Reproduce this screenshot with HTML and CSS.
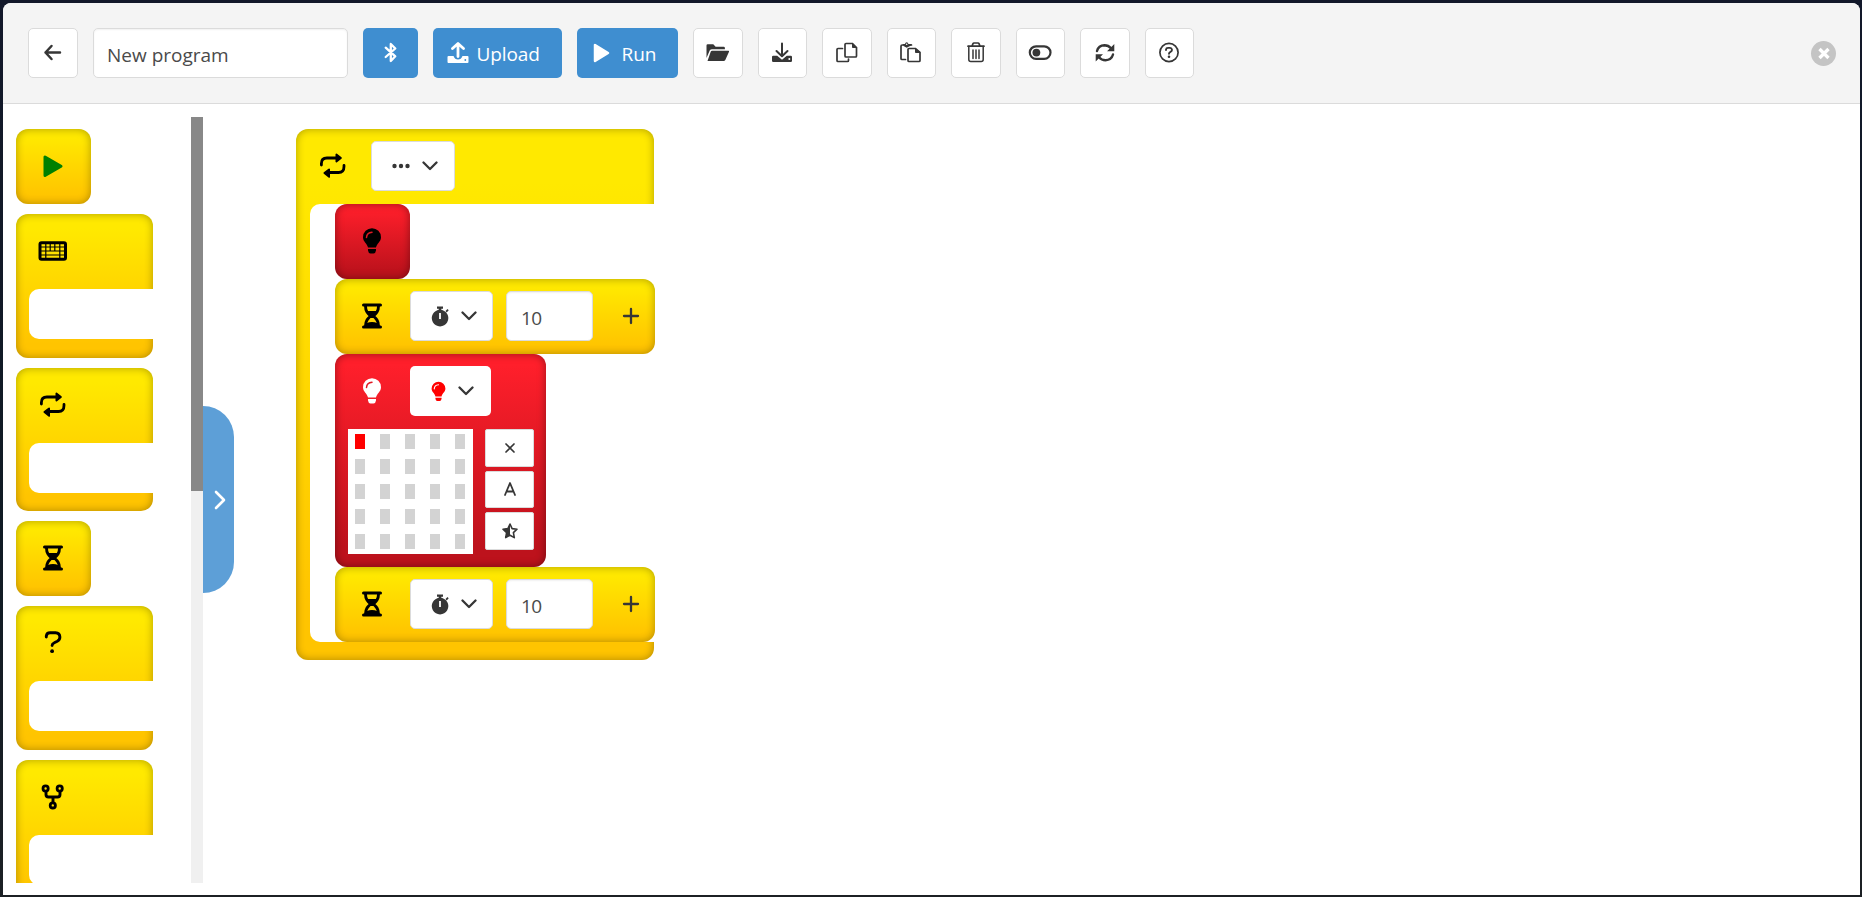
FILE: index.html
```
<!DOCTYPE html>
<html lang="en">
<head>
<meta charset="utf-8">
<title>Program editor</title>
<link rel="stylesheet" href="styles.css">
</head>
<body>
<svg class="defs" aria-hidden="true">
  <symbol id="repeat" viewBox="0 0 30 30"><path d="M3.400 14v-1.500q0-5.500 5.500-5.500H19M26 14.500v1q0 6-5.500 6H10" fill="none" stroke="currentColor" stroke-width="2.800" stroke-linecap="round"/><path d="M17.500 3.200q.5-1 1.500-.4l4.500 3.400q.8.800 0 1.600L19 11.200q-1 .6-1.500-.4zM12 18.200q-.4-1-1.500-.4L5.800 21.200q-.8.700 0 1.500l4.700 3.900q1 .6 1.500-.4z" fill="currentColor"/></symbol>
  <symbol id="hourglass" viewBox="0 0 30 30"><path d="M6.500 4h17M6.500 26h17" stroke="currentColor" stroke-width="3" stroke-linecap="round"/><path d="M8.500 5c0 5 2 7 5 10-3 3-5 5-5 10M21.500 5c0 5-2 7-5 10 3 3 5 5 5 10" fill="none" stroke="currentColor" stroke-width="2.900"/><path d="M9.500 10h11L15 16zM8.500 25l1.500-3q2-1 5-1t5 1l1.500 3v1.500h-13zM12.500 14h5v3h-5z" fill="currentColor"/></symbol>
  <symbol id="bulb" viewBox="0 0 30 30"><path d="M15 2.200a9 9 0 0 0-9 9c0 4.500 4 6 5 10.300h8c1-4.300 5-5.800 5-10.300a9 9 0 0 0-9-9zM11 23h8v1.500q-.4 2.900-2.500 2.900h-3q-2.100 0-2.500-2.900z" fill="currentColor"/><path class="glint" d="M9.500 11.500q.3-5 5.500-5.300" fill="none" stroke-width="1.500" stroke-linecap="round"/></symbol>
  <symbol id="stopwatch" viewBox="0 0 20 22"><path d="M7 1.500h6v2.300H7zM8.700 3h2.600v3H8.700zM15.500 6l2-2 1.200 1.200-2 2.200z" fill="currentColor"/><path fill-rule="evenodd" d="M10 4.800a8.300 8.300 0 1 0 .1 0zM9.100 8h1.800v6H9.100z" fill="currentColor"/></symbol>
  <symbol id="chevron" viewBox="0 0 16 10"><path d="M1.500 1.500 8 8l6.500-6.500" fill="none" stroke="currentColor" stroke-width="2.300" stroke-linecap="round" stroke-linejoin="round"/></symbol>
  <symbol id="plus" viewBox="0 0 18 18"><path d="M9 2v14M2 9h14" stroke="currentColor" stroke-width="2.300" stroke-linecap="round"/></symbol>
</svg>

<main class="modal">
  <header class="toolbar">
    <button class="btn btn-back"><svg class="ico" viewBox="0 0 30 30"><path d="M22 14.500H7.500M13.500 8 7.500 14.500 13.500 21" fill="none" stroke="currentColor" stroke-width="2.500" stroke-linecap="round" stroke-linejoin="round"/></svg></button>
    <input class="field name" value="New program" aria-label="Program name">
    <button class="btn primary bluetooth"><svg class="ico" viewBox="0 0 30 30"><path d="M9.700 9.700 19.300 18.300 14.800 23V6l4.500 4.500-9.600 8.500" fill="none" stroke="currentColor" stroke-width="2.300" stroke-linecap="round" stroke-linejoin="round"/></svg></button>
    <button class="btn primary upload"><svg width="22" height="22" viewBox="0 0 22 22"><path d="M.5 15q0-1 1-1h5q1.300 3.500 4.500 3.500t4.500-3.500h5q1 0 1 1v5q0 1-1 1h-19q-1 0-1-1z" fill="currentColor"/><path d="M11 14.500V3M5.500 6.500 11 1.500l5.500 5" fill="none" stroke="currentColor" stroke-width="2.800" stroke-linejoin="round" stroke-linecap="round"/><circle cx="18.300" cy="18" r=".9" fill="#3f8ed0"/></svg><span>Upload</span></button>
    <button class="btn primary run"><svg width="17" height="20" viewBox="0 0 17 20"><path d="M2 2v16L15 10z" fill="currentColor" stroke="currentColor" stroke-width="2.500" stroke-linejoin="round"/></svg><span>Run</span></button>
    <button class="btn"><svg class="ico" viewBox="0 0 30 30"><path d="M3.500 20V7.500Q3.500 6.300 4.700 6.300h5.600l2.300 2.400h8q1.300 0 1.300 1.300v1.200H9q-1.500 0-2.300 1.400z" fill="currentColor"/><path d="M9.200 12.700h16.100q1.200 0 .7 1l-3.700 8.300q-.5 1-1.700 1H4.500l3.200-9.300q.4-1 1.500-1z" fill="currentColor"/></svg></button>
    <button class="btn"><svg class="ico" viewBox="0 0 30 30"><path d="M5 19q0-1.200 1.200-1.200h4l4.800 4 4.800-4h4Q25 17.800 25 19v3.800q0 1.200-1.200 1.200H6.200Q5 24 5 22.800z" fill="currentColor"/><path d="M15 5.500v12M9.500 13l5.500 5.300 5.500-5.300" fill="none" stroke="currentColor" stroke-width="2" stroke-linecap="round" stroke-linejoin="round"/><circle cx="22.300" cy="21" r="1" fill="#fff"/></svg></button>
    <button class="btn"><svg class="ico" viewBox="0 0 30 30"><path d="M10.500 10.500H6q-1 0-1 1v11q0 1 1 1h9.500q1 0 1-1V21M14 5.500h6.500l4 4V18q0 1-1 1H14q-1 0-1-1V6.500q0-1 1-1z" fill="none" stroke="currentColor" stroke-width="1.700" stroke-linecap="round"/><path d="M20.500 5.500v4h4z" fill="currentColor" stroke="currentColor"/></svg></button>
    <button class="btn"><svg class="ico" viewBox="0 0 30 30"><path d="M8 7H6.200Q5 7 5 8.200V20.500q0 1 1 1h3.500M14 7h1.500M13 10.500h6.500l4.500 4V22.500q0 1-1 1H13q-1 0-1-1v-11q0-1 1-1z" fill="none" stroke="currentColor" stroke-width="1.700" stroke-linecap="round"/><path d="M19.500 10.500v4H24z" fill="currentColor" stroke="currentColor"/><path d="M7 6h2q.3-1.800 1.700-1.800T12.400 6H16l-1.500 1.700-3.800 2L7.500 8z" fill="currentColor"/><circle cx="10.700" cy="6.300" r=".8" fill="#fff"/></svg></button>
    <button class="btn"><svg class="ico" viewBox="0 0 30 30"><path d="M7.800 8.500v13q0 2 2 2h10.400q2 0 2-2v-13M12 12v8.500M15 12v8.500M18 12v8.500" fill="none" stroke="currentColor" stroke-width="1.500" stroke-linecap="round"/><path d="M7 8.200h16M11 8l1-2.300q.3-.7 1-.7h4q.7 0 1 .7L19 8" fill="none" stroke="currentColor" stroke-width="1.700" stroke-linecap="round"/></svg></button>
    <button class="btn"><svg class="ico" viewBox="0 0 30 30"><rect x="4.800" y="8.300" width="20.700" height="12.600" rx="6.300" fill="none" stroke="currentColor" stroke-width="2.200"/><circle cx="11.400" cy="14.600" r="3.900" fill="currentColor"/></svg></button>
    <button class="btn"><svg class="ico" viewBox="0 0 30 30"><path d="M7 13Q8.500 7.500 14.500 7.300q4 0 6.500 3M23 16.500Q21.500 22 15.500 22.200q-4 0-6.500-3" fill="none" stroke="currentColor" stroke-width="2.400" stroke-linecap="round"/><path d="M24.300 6v7.200H17zM5.700 23.500v-7.200H13z" fill="currentColor"/></svg></button>
    <button class="btn"><svg class="ico" viewBox="0 0 30 30"><circle cx="15" cy="14.500" r="9.100" fill="none" stroke="currentColor" stroke-width="1.700"/><path d="M12 12v-.5q.2-1.600 2-1.600h2q1.800.1 2 1.900 0 1.300-1.500 2-1.500.7-1.500 2" fill="none" stroke="currentColor" stroke-width="1.900" stroke-linecap="round"/><circle cx="15" cy="18.700" r="1.300" fill="currentColor"/></svg></button>
    <button class="close" aria-label="Close"><svg width="25" height="25" viewBox="0 0 25 25"><path d="m8.500 8 9 9m0-9-9 9" stroke="#fff" stroke-width="3.300"/></svg></button>
  </header>

  <div class="workspace">
    <aside class="palette">
      <div class="palette-list">
        <div class="block small"><div class="glyph go"><svg class="ico" viewBox="0 0 30 30"><path d="M7 6v18.500L23 15.200z" fill="currentColor" stroke="currentColor" stroke-width="3" stroke-linejoin="round"/></svg></div></div>
        <div class="block container"><div class="glyph"><svg class="ico" viewBox="0 0 30 30"><rect x="2" y="6.800" width="25.500" height="16.500" rx="1.500" fill="none" stroke="currentColor" stroke-width="3"/><path d="M3 11h24M3 15h24M3 19h24M7.800 8v14M12.200 8v7M16.800 8v7M21.800 8v14" stroke="currentColor" stroke-width="1.200"/></svg></div><div class="slot"></div></div>
        <div class="block container"><div class="glyph"><svg class="ico"><use href="#repeat"/></svg></div><div class="slot"></div></div>
        <div class="block small"><div class="glyph"><svg class="ico"><use href="#hourglass"/></svg></div></div>
        <div class="block container"><div class="glyph"><svg class="ico" viewBox="0 0 30 30"><path d="M8.300 9V8q.5-3.200 3.700-3.200h5.500q4.200.3 4.400 4.200 0 2.900-2.600 4.300l-3 1.500q-2.200 1-2.200 2.700" fill="none" stroke="currentColor" stroke-width="2.900" stroke-linecap="round"/><circle cx="14.100" cy="23.200" r="1.900" fill="currentColor"/></svg></div><div class="slot"></div></div>
        <div class="block container"><div class="glyph"><svg class="ico" viewBox="0 0 30 30"><path d="M8 9v3.500q0 2.500 2.500 2.500h9q2.500 0 2.500-2.500V9M15 15v5" fill="none" stroke="currentColor" stroke-width="2.900"/><g fill="none" stroke="currentColor" stroke-width="2.800"><circle cx="7.600" cy="6.500" r="2.600"/><circle cx="21.700" cy="6.500" r="2.600"/><circle cx="14.800" cy="23.400" r="2.600"/></g></svg></div><div class="slot"></div></div>
      </div>
      <div class="scrollbar"><div class="thumb"></div></div>
    </aside>
    <button class="drawer" aria-label="More"><svg width="12" height="20" viewBox="0 0 12 20"><path d="m2 2 8 8-8 8" fill="none" stroke="currentColor" stroke-width="2.600" stroke-linecap="round" stroke-linejoin="round"/></svg></button>

    <section class="canvas">
      <div class="block loop">
        <div class="row">
          <div class="glyph"><svg class="ico"><use href="#repeat"/></svg></div>
          <button class="select forever"><svg width="18" height="6" viewBox="0 0 18 6"><g fill="currentColor"><circle cx="2.500" cy="3" r="2.200"/><circle cx="9" cy="3" r="2.200"/><circle cx="15.500" cy="3" r="2.200"/></g></svg><svg class="chev"><use href="#chevron"/></svg></button>
        </div>
        <div class="body">
          <div class="block red small"><div class="glyph"><svg class="ico"><use href="#bulb"/></svg></div></div>
          <div class="block wait row">
            <div class="glyph"><svg class="ico"><use href="#hourglass"/></svg></div>
            <button class="select timer"><svg width="20" height="22"><use href="#stopwatch"/></svg><svg class="chev"><use href="#chevron"/></svg></button>
            <input class="field num" value="10" aria-label="Seconds">
            <svg class="plus"><use href="#plus"/></svg>
          </div>
          <div class="block red display">
            <div class="row">
              <div class="glyph light"><svg class="ico"><use href="#bulb"/></svg></div>
              <button class="select color"><svg class="redbulb"><use href="#bulb"/></svg><svg class="chev"><use href="#chevron"/></svg></button>
            </div>
            <div class="panel">
              <div class="matrix">
                <i class="on"></i><i></i><i></i><i></i><i></i>
                <i></i><i></i><i></i><i></i><i></i>
                <i></i><i></i><i></i><i></i><i></i>
                <i></i><i></i><i></i><i></i><i></i>
                <i></i><i></i><i></i><i></i><i></i>
              </div>
              <div class="tools">
                <button class="tool"><svg width="12" height="12" viewBox="0 0 12 12"><path d="m2 2 8 8m0-8-8 8" stroke="currentColor" stroke-width="1.700" stroke-linecap="round"/></svg></button>
                <button class="tool"><svg width="14" height="16" viewBox="0 0 14 16"><path d="M2 14 7 2l5 12M3.500 10.500h7" fill="none" stroke="currentColor" stroke-width="1.800" stroke-linecap="round" stroke-linejoin="round"/></svg></button>
                <button class="tool"><svg width="18" height="18" viewBox="0 0 18 18"><path d="m9 2 2.100 4.600 4.900.6-3.600 3.400.9 5L9 13.200l-4.300 2.400.9-5L2 7.200l4.900-.6z" fill="none" stroke="currentColor" stroke-width="1.600" stroke-linejoin="round"/><path d="M9 2v11.200l-4.300 2.400.9-5L2 7.200l4.900-.6z" fill="currentColor"/></svg></button>
              </div>
            </div>
          </div>
          <div class="block wait row">
            <div class="glyph"><svg class="ico"><use href="#hourglass"/></svg></div>
            <button class="select timer"><svg width="20" height="22"><use href="#stopwatch"/></svg><svg class="chev"><use href="#chevron"/></svg></button>
            <input class="field num" value="10" aria-label="Seconds">
            <svg class="plus"><use href="#plus"/></svg>
          </div>
        </div>
      </div>
    </section>
  </div>
</main>
</body>
</html>
```

FILE: styles.css
```
* { box-sizing: border-box; }
body {
  margin: 0;
  height: 897px;
  padding: 3px 2px 2px 3px;
  overflow: hidden;
  background: linear-gradient(#12182a, #101b24 60%, #1c2024);
  font-family: "Open Sans", "Noto Sans", sans-serif;
  font-size: 19px;
  color: #363636;
}
.defs { position: absolute; width: 0; height: 0; }
svg { display: block; flex: none; }
button { font: inherit; color: inherit; padding: 0; margin: 0; }
.ico { width: 30px; height: 30px; }

.modal {
  height: 892px;
  display: flex;
  flex-direction: column;
  background: #fff;
  border-radius: 8px 8px 0 0;
  overflow: hidden;
}
.toolbar {
  flex: none;
  height: 101px;
  display: flex;
  align-items: flex-start;
  gap: 15px;
  padding: 25px 24px 0 25px;
  background: #f4f4f4;
  border-bottom: 1px solid #dbdbdb;
}
.btn, .field, .select, .tool {
  background: #fff;
  border: 1px solid #dbdbdb;
  border-radius: 5px;
}
.btn {
  flex: none;
  width: 49.500px;
  height: 50px;
  display: flex;
  align-items: center;
  justify-content: center;
}
.btn-back { width: 50px; }
.primary { background: #3f8ed0; border: 0; color: #fff; }
.bluetooth { width: 55px; }
.upload, .run { justify-content: flex-start; line-height: 50px; }
.upload { width: 129px; padding-left: 13.500px; gap: 8px; }
.run { width: 101px; padding-left: 16px; gap: 11.500px; }
.upload svg, .run svg { margin-top: -1px; }
.upload span, .run span { padding-top: 2px; letter-spacing: -.1px; }
.field {
  flex: none;
  height: 50px;
  padding: 4px 14px 0;
  font: inherit;
  color: #4a4a4a;
  box-shadow: inset 0 1px 2px rgba(10, 10, 10, .06);
}
.name { width: 255px; padding-left: 13px; }
.close {
  width: 25px;
  height: 25px;
  margin: 13px 0 0 auto;
  border: 0;
  border-radius: 50%;
  background: #c4c4c4;
}

.workspace { flex: 1; min-height: 0; display: flex; padding: 13px 0 12px; }
.palette { display: flex; width: 200px; flex: none; }
.palette-list {
  flex: 1;
  display: flex;
  flex-direction: column;
  align-items: flex-start;
  gap: 10px;
  padding: 12px 0 0 13px;
  overflow: hidden;
}
.scrollbar { width: 12px; background: #f0f0f0; }
.thumb { height: 374px; background: #888; }
.drawer {
  width: 31px;
  height: 187px;
  margin-top: 289px;
  padding-left: 10.500px;
  border: 0;
  border-radius: 0 31px 31px 0;
  background: #5d9fd7;
  color: #fff;
}

.block {
  flex: none;
  border-radius: 12px;
  background: linear-gradient(#ffe900 10%, #ffc400 90%);
  box-shadow: inset 0 0 8px rgba(0, 0, 0, .32);
}
.small { width: 75px; height: 75px; }
.red {
  background: linear-gradient(#ff1f2b 5%, #bd121c 90%);
  box-shadow: inset 0 0 8px rgba(0, 0, 0, .4);
}
.glyph {
  --glint: #e01823;
  flex: none;
  width: 75px;
  height: 75px;
  display: flex;
  align-items: center;
  justify-content: center;
  padding: 0 1px 1px 0;
  color: #000;
}
.go { color: #008000; }
.light { color: #fff; }
.glint { stroke: var(--glint); }
.container { width: 137px; height: 143.670px; }
.slot {
  height: 50px;
  margin-left: 13px;
  border-radius: 10px 0 0 10px;
  background: #fff;
}

.canvas { padding: 12px 0 0 62px; }
.loop { width: 358px; padding-bottom: 18px; }
.row { display: flex; align-items: center; height: 75px; padding-bottom: 1px; }
.row .glyph { padding-bottom: 0; }
.body {
  width: 345px;
  margin-left: 14px;
  padding-left: 25px;
  border-radius: 10px 0 0 10px;
  background: linear-gradient(#fff, #fff) 0 0 / 344px 100% no-repeat;
}
.wait { width: 320px; }
.select {
  flex: none;
  height: 50px;
  display: flex;
  align-items: center;
  justify-content: center;
}
.chev { width: 16px; height: 10px; }
.forever { width: 84px; gap: 12px; padding-left: 4px; }
.timer { width: 83px; gap: 10.500px; padding-left: 3.500px; }
.color { width: 81px; border: 0; gap: 8px; padding-right: 1px; }
.redbulb { --glint: #fff; width: 23px; height: 23px; color: #f00; }
.num { width: 87px; margin-left: 13px; padding-top: 3px; letter-spacing: -.5px; }
.plus { width: 18px; height: 18px; margin-left: 28.500px; }
.display { width: 211px; height: 213px; }
.panel { display: flex; gap: 12px; padding-left: 13px; }
.matrix {
  width: 125px;
  height: 125px;
  display: grid;
  grid-template-columns: repeat(5, 25px);
  grid-auto-rows: 25px;
  background: #fff;
}
.matrix i { width: 10px; height: 15px; margin: 5px 0 0 7px; background: #d3d3d3; }
.matrix .on { background: #f00; }
.tools { display: flex; flex-direction: column; gap: 4px; }
.tool {
  width: 49px;
  height: 37.500px;
  display: flex;
  align-items: center;
  justify-content: center;
  border-radius: 2px;
}
```
